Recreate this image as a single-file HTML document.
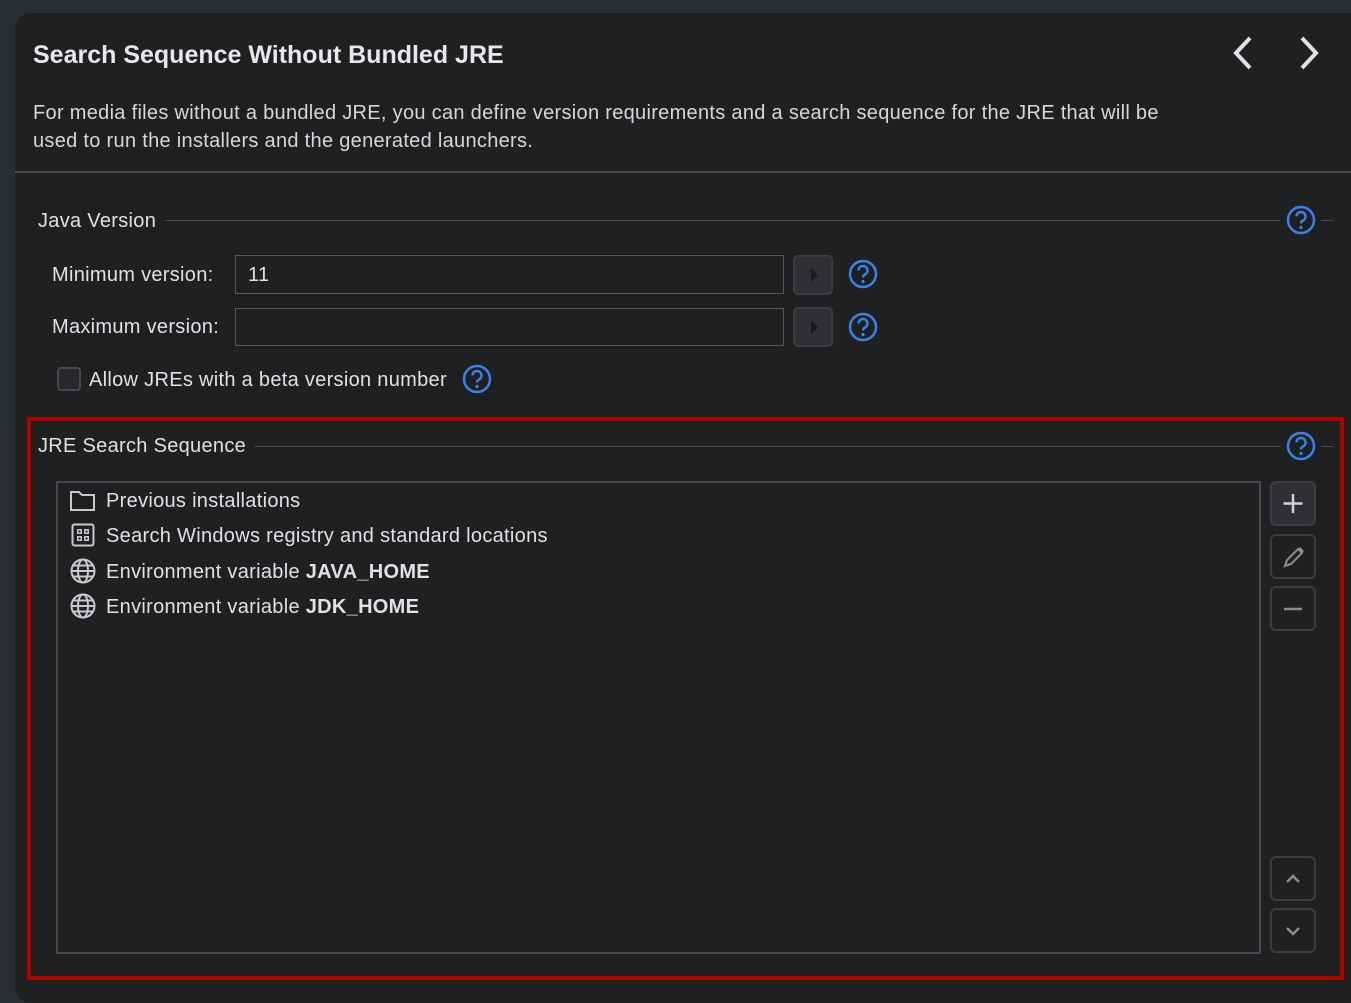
<!DOCTYPE html>
<html><head><style>
*{box-sizing:border-box;margin:0;padding:0}
body{width:1351px;height:990px;background:#2a2d31;font-family:"Liberation Sans","DejaVu Sans",sans-serif;color:#dfe1e5;position:relative;overflow:hidden}
.panel{position:absolute;left:15px;top:13px;width:1350px;height:990px;background:#1f2022;border-radius:16px}
.abs{position:absolute}
.t{font-size:20px;letter-spacing:0.3px;white-space:nowrap}
.q{position:absolute;width:30px;height:30px}
.line{position:absolute;height:1px;background:#44474b}
.box{position:absolute;border:1px solid #55585c;background:#1f2022}
.btn{position:absolute;width:40px;height:40px;border:2px solid #3a3c40;border-radius:5px}
.sb{position:absolute;width:46px;height:45px;border:2px solid #3b3d41;border-radius:6px}
</style></head><body>
<div class="panel"></div>
<div class="abs" style="left:33px;top:41px;font-size:25px;font-weight:bold;color:#e6e8ec">Search Sequence Without Bundled JRE</div>
<svg class="abs" style="left:1226px;top:34px" width="110" height="40"><path d="M24 4 L10 19 L24 34" stroke="#dfe1e5" stroke-width="4" fill="none"/><path d="M76 4 L90 19 L76 34" stroke="#dfe1e5" stroke-width="4" fill="none"/></svg>
<div class="abs t" style="left:33px;top:99px;line-height:28px;color:#d5d7db">For media files without a bundled JRE, you can define version requirements and a search sequence for the JRE that will be<br>used to run the installers and the generated launchers.</div>
<div class="abs" style="left:15px;top:171px;width:1336px;height:2px;background:#45484c"></div>

<div class="abs t" style="left:38px;top:210px">Java Version</div>
<div class="line" style="left:165px;top:220px;width:1115px"></div>
<div class="line" style="left:1321px;top:220px;width:12px"></div>
<svg class="q" style="left:1286px;top:205px" viewBox="0 0 30 30"><circle cx="15" cy="15" r="13" stroke="#3b82e6" stroke-width="2.5" fill="none"/><path d="M10.5 11.5a4.5 4.5 0 1 1 6.5 4c-1.5.8-2 1.5-2 3" stroke="#3b82e6" stroke-width="2.5" fill="none"/><circle cx="15" cy="22.5" r="1.6" fill="#3b82e6"/></svg>

<div class="abs t" style="left:52px;top:264px">Minimum version:</div>
<div class="box" style="left:235px;top:255px;width:549px;height:39px"></div>
<div class="abs t" style="left:248px;top:264px">11</div>
<div class="btn" style="left:793px;top:255px;background:#2e3033"><svg width="36" height="36"><path d="M16 11 L23 18 L16 25Z" fill="#1a1b1d"/></svg></div>
<svg class="q" style="left:848px;top:259px" viewBox="0 0 30 30"><circle cx="15" cy="15" r="13" stroke="#3b82e6" stroke-width="2.5" fill="none"/><path d="M10.5 11.5a4.5 4.5 0 1 1 6.5 4c-1.5.8-2 1.5-2 3" stroke="#3b82e6" stroke-width="2.5" fill="none"/><circle cx="15" cy="22.5" r="1.6" fill="#3b82e6"/></svg>

<div class="abs t" style="left:52px;top:316px">Maximum version:</div>
<div class="box" style="left:235px;top:308px;width:549px;height:38px"></div>
<div class="btn" style="left:793px;top:307px;background:#2e3033"><svg width="36" height="36"><path d="M16 11 L23 18 L16 25Z" fill="#1a1b1d"/></svg></div>
<svg class="q" style="left:848px;top:312px" viewBox="0 0 30 30"><circle cx="15" cy="15" r="13" stroke="#3b82e6" stroke-width="2.5" fill="none"/><path d="M10.5 11.5a4.5 4.5 0 1 1 6.5 4c-1.5.8-2 1.5-2 3" stroke="#3b82e6" stroke-width="2.5" fill="none"/><circle cx="15" cy="22.5" r="1.6" fill="#3b82e6"/></svg>

<div class="abs" style="left:57px;top:367px;width:24px;height:24px;border:2px solid #45484c;border-radius:4px;background:#27292c"></div>
<div class="abs t" style="left:89px;top:369px">Allow JREs with a beta version number</div>
<svg class="q" style="left:462px;top:364px" viewBox="0 0 30 30"><circle cx="15" cy="15" r="13" stroke="#3b82e6" stroke-width="2.5" fill="none"/><path d="M10.5 11.5a4.5 4.5 0 1 1 6.5 4c-1.5.8-2 1.5-2 3" stroke="#3b82e6" stroke-width="2.5" fill="none"/><circle cx="15" cy="22.5" r="1.6" fill="#3b82e6"/></svg>

<div class="abs" style="left:27px;top:417px;width:1317px;height:563px;border:4px solid #b00000"></div>
<div class="abs t" style="left:38px;top:435px">JRE Search Sequence</div>
<div class="line" style="left:254px;top:446px;width:1026px"></div>
<div class="line" style="left:1321px;top:446px;width:12px"></div>
<svg class="q" style="left:1286px;top:431px" viewBox="0 0 30 30"><circle cx="15" cy="15" r="13" stroke="#3b82e6" stroke-width="2.5" fill="none"/><path d="M10.5 11.5a4.5 4.5 0 1 1 6.5 4c-1.5.8-2 1.5-2 3" stroke="#3b82e6" stroke-width="2.5" fill="none"/><circle cx="15" cy="22.5" r="1.6" fill="#3b82e6"/></svg>

<div class="box" style="left:56px;top:481px;width:1205px;height:473px;border:2px solid #45484c"></div>
<svg class="abs" style="left:69px;top:489px" width="28" height="24"><path d="M2 3h8l3 3h12v15H2z" stroke="#c8cacd" stroke-width="2" fill="none"/></svg>
<div class="abs t" style="left:106px;top:490px">Previous installations</div>
<svg class="abs" style="left:71px;top:523px" width="24" height="24"><rect x="1.5" y="1.5" width="21" height="21" rx="2" stroke="#c8cacd" stroke-width="2" fill="none"/><rect x="6" y="6" width="5" height="5" fill="#c8cacd"/><rect x="13" y="6" width="5" height="5" fill="#c8cacd"/><rect x="6" y="13" width="5" height="5" fill="#c8cacd"/><rect x="13" y="13" width="5" height="5" fill="#c8cacd"/><rect x="7.5" y="7.5" width="2" height="2" fill="#1f2022"/><rect x="14.5" y="7.5" width="2" height="2" fill="#1f2022"/><rect x="7.5" y="14.5" width="2" height="2" fill="#1f2022"/><rect x="14.5" y="14.5" width="2" height="2" fill="#1f2022"/></svg>
<div class="abs t" style="left:106px;top:525px">Search Windows registry and standard locations</div>
<svg class="abs" style="left:70px;top:558px" width="26" height="26"><g stroke="#c8cacd" stroke-width="2" fill="none"><circle cx="13" cy="13" r="11.5"/><ellipse cx="13" cy="13" rx="5" ry="11.5"/><path d="M1.5 13h23M3.5 7.5h19M3.5 18.5h19"/></g></svg>
<div class="abs t" style="left:106px;top:561px">Environment variable <b>JAVA_HOME</b></div>
<svg class="abs" style="left:70px;top:593px" width="26" height="26"><g stroke="#c8cacd" stroke-width="2" fill="none"><circle cx="13" cy="13" r="11.5"/><ellipse cx="13" cy="13" rx="5" ry="11.5"/><path d="M1.5 13h23M3.5 7.5h19M3.5 18.5h19"/></g></svg>
<div class="abs t" style="left:106px;top:596px">Environment variable <b>JDK_HOME</b></div>

<div class="sb" style="left:1270px;top:481px;background:#2e3033"><svg width="42" height="41"><path d="M21 11v19M11.5 20.5h19" stroke="#d0d2d5" stroke-width="2.5"/></svg></div>
<div class="sb" style="left:1270px;top:534px"><svg width="42" height="41"><path d="M13 30l2-6 11-11 4 4-11 11z" stroke="#8a8c90" stroke-width="2" fill="none"/><path d="M26 13l2-2 4 4-2 2z" fill="#8a8c90"/></svg></div>
<div class="sb" style="left:1270px;top:586px"><svg width="42" height="41"><path d="M12 21h18" stroke="#8a8c90" stroke-width="2.5"/></svg></div>
<div class="sb" style="left:1270px;top:856px"><svg width="42" height="41"><path d="M15 24l6-6 6 6" stroke="#8a8c90" stroke-width="2.5" fill="none"/></svg></div>
<div class="sb" style="left:1270px;top:908px"><svg width="42" height="41"><path d="M15 18l6 6 6-6" stroke="#8a8c90" stroke-width="2.5" fill="none"/></svg></div>
</body></html>
